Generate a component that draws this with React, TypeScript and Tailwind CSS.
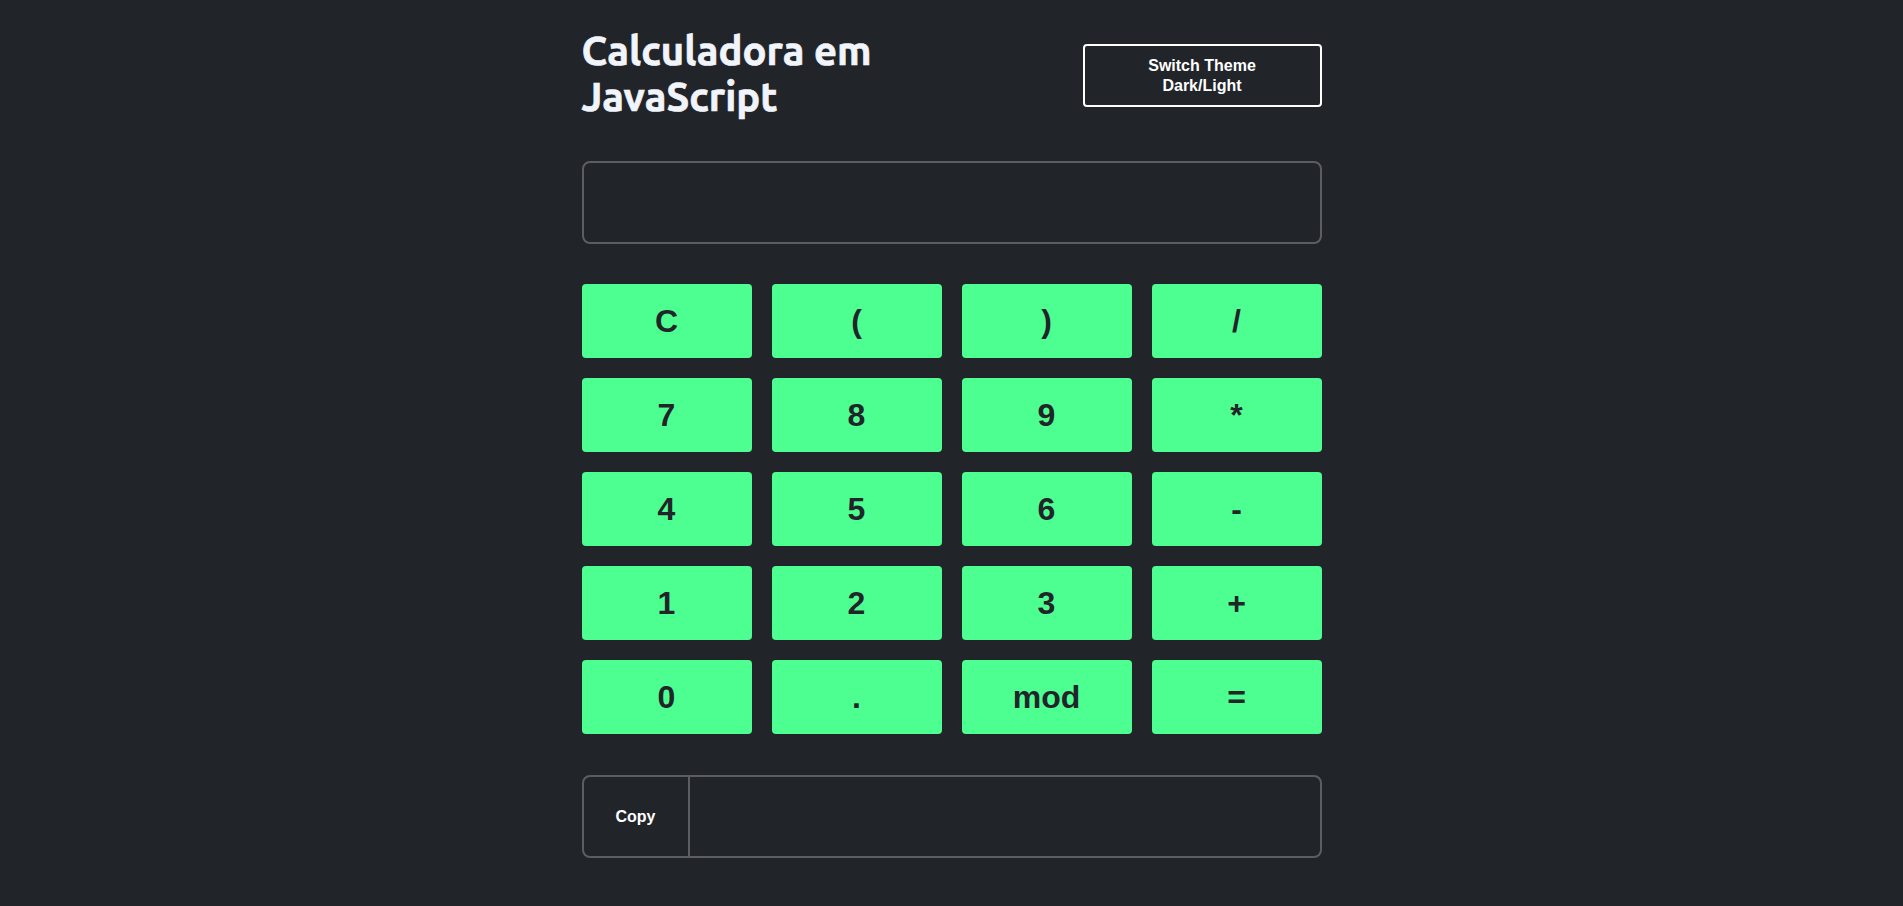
import React, { useState } from "react";

const keys = [
  "C", "(", ")", "/",
  "7", "8", "9", "*",
  "4", "5", "6", "-",
  "1", "2", "3", "+",
  "0", ".", "mod", "=",
];

export default function App() {
  const [display, setDisplay] = useState("");
  const [result, setResult] = useState("");

  const press = (k: string) => {
    if (k === "C") {
      setDisplay("");
      return;
    }
    if (k === "=") {
      try {
        // eslint-disable-next-line no-new-func
        const value = Function(`return (${display.replace(/mod/g, "%")})`)();
        setResult(String(value));
      } catch {
        setResult("ERROR");
      }
      return;
    }
    setDisplay(display + (k === "mod" ? "%" : k));
  };

  return (
    <div className="min-h-screen w-full bg-[#212529] font-['Liberation_Sans',Arial,sans-serif]">
      <div className="mx-auto w-[740px] pt-[28px]">
        <header className="flex items-center justify-between">
          <h1 className="w-[380px] font-['Ubuntu','Open_Sans',sans-serif] text-[40px] font-bold leading-[46px] text-[#f1f4fb] [-webkit-text-stroke:0.7px_#f1f4fb]">
            Calculadora em JavaScript
          </h1>
          <button className="mt-[3px] flex h-[63px] w-[239px] items-center justify-center rounded-[4px] border-2 border-white text-[16px] font-bold leading-[20px] text-white">
            Switch Theme
            <br />
            Dark/Light
          </button>
        </header>

        <input
          value={display}
          onChange={(e) => setDisplay(e.target.value)}
          className="mt-[41px] block h-[83px] w-full rounded-lg border-2 border-[#5c5d60] bg-transparent px-4 text-right text-[32px] text-white outline-none"
        />

        <div className="mt-[40px] grid grid-cols-4 gap-5">
          {keys.map((k) => (
            <button
              key={k}
              onClick={() => press(k)}
              className="h-[74px] rounded-[4px] bg-[#4dff91] text-[32px] font-bold text-[#212529]"
            >
              {k}
            </button>
          ))}
        </div>

        <div className="mt-[41px] flex h-[83px] overflow-hidden rounded-lg border-2 border-[#5c5d60]">
          <button
            onClick={() => navigator.clipboard?.writeText(result)}
            className="w-[106px] border-r-2 border-[#5c5d60] text-[16px] font-bold text-white"
          >
            Copy
          </button>
          <input
            value={result}
            readOnly
            className="flex-1 bg-transparent px-4 text-[24px] text-white outline-none"
          />
        </div>
      </div>
    </div>
  );
}
